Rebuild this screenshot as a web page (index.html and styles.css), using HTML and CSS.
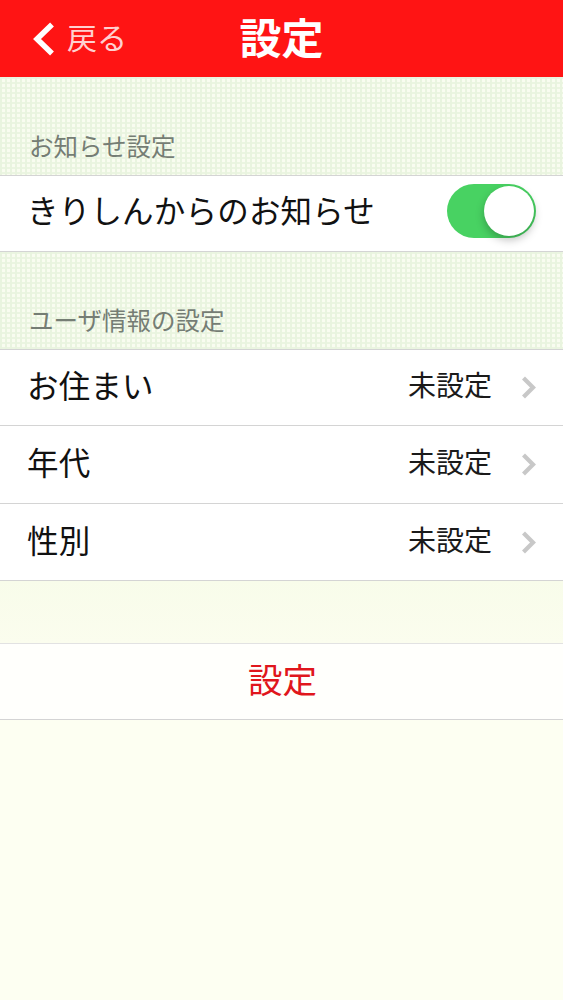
FILE: index.html
```html
<!DOCTYPE html>
<html lang="ja">
<head>
<meta charset="utf-8">
<title>設定</title>
<link rel="stylesheet" href="styles.css">
</head>
<body>
<div class="page">
  <header class="nav">
    <div class="back">
      <svg class="back-icon" width="24" height="36" viewBox="0 0 24 36"><path d="M21 3.500 L6 18 L21 32.500" fill="none" stroke="#fff" stroke-width="5.500"/></svg>
      <span>戻る</span>
    </div>
    <h1 class="title">設定</h1>
  </header>
  <section class="band band-first"><h2 class="section-label">お知らせ設定</h2></section>
  <div class="row row-bordered">
    <span class="row-label">きりしんからのお知らせ</span>
    <span class="toggle"><span class="knob"></span></span>
  </div>
  <section class="band band-second"><h2 class="section-label">ユーザ情報の設定</h2></section>
  <div class="row row-top">
    <span class="row-label">お住まい</span>
    <span class="row-value">未設定</span>
    <svg class="chevron" width="16" height="24" viewBox="0 0 16 24"><path d="M2.500 3 L12 12.500 L2.500 22" fill="none" stroke="#c8c8c8" stroke-width="4.200"/></svg>
  </div>
  <div class="row">
    <span class="row-label">年代</span>
    <span class="row-value">未設定</span>
    <svg class="chevron" width="16" height="24" viewBox="0 0 16 24"><path d="M2.500 3 L12 12.500 L2.500 22" fill="none" stroke="#c8c8c8" stroke-width="4.200"/></svg>
  </div>
  <div class="row">
    <span class="row-label">性別</span>
    <span class="row-value">未設定</span>
    <svg class="chevron" width="16" height="24" viewBox="0 0 16 24"><path d="M2.500 3 L12 12.500 L2.500 22" fill="none" stroke="#c8c8c8" stroke-width="4.200"/></svg>
  </div>
  <div class="spacer"></div>
  <div class="row row-action">設定</div>
</div>
</body>
</html>
```
FILE: styles.css
```css
* { box-sizing: border-box; }
html, body { margin: 0; padding: 0; }
body {
  background: #fdfff2;
  font-family: "Noto Sans CJK JP", "Noto Sans", sans-serif;
}
.page { width: 563px; height: 1000px; overflow: hidden; background: #fdfff2; }
.nav {
  height: 77px;
  background: #ff1414;
  display: flex;
  align-items: center;
  justify-content: center;
  position: relative;
}
.back {
  position: absolute;
  left: 31px;
  top: 21px;
  display: flex;
  align-items: center;
  gap: 12px;
  color: #ffd0d0;
  font-size: 30px;
  line-height: 36px;
}
.back span { position: relative; top: -3px; }
.back-icon { display: block; }
.title {
  margin: 0;
  color: #fff;
  font-size: 42px;
  font-weight: 700;
  line-height: 72px;
  height: 77px;
}
.band {
  display: flex;
  align-items: flex-end;
  padding: 0 0 14px 29px;
  background-color: #f9fcf0;
  background-image:
    linear-gradient(90deg, #e9f4df 0, #e9f4df 1.500px, transparent 2.500px),
    linear-gradient(#ebf5e1 0, #ebf5e1 1.500px, transparent 2.500px);
  background-size: 5px 5px;
}
.band-first { height: 98px; }
.band-second { height: 97px; }
.section-label {
  margin: 0;
  font-size: 24.500px;
  font-weight: 400;
  line-height: 30px;
  color: #757d74;
}
.row {
  height: 77.500px;
  padding: 0 26px 6px 28px;
  display: flex;
  align-items: center;
  background: #fff;
  border-bottom: 1px solid #d4d4d4;
}
.row-bordered { height: 77px; padding-bottom: 9px; border-top: 1px solid #d4d4d4; }
.row-top { height: 77px; padding-bottom: 7px; border-top: 1px solid #d4d4d4; }
.row-label { flex: 1; font-size: 31.500px; line-height: 40px; color: #111; margin-left: -1px; letter-spacing: 0.200px; }
.row-value { font-size: 28px; line-height: 40px; color: #1a1a1a; margin-right: 29px; }
.chevron { display: block; position: relative; top: 3px; }
.toggle {
  position: relative;
  top: 2px;
  width: 89px;
  height: 54px;
  border-radius: 27px;
  background: #48d262;
  margin-right: 1px;
}
.knob {
  position: absolute;
  right: 2px;
  top: 2px;
  width: 50px;
  height: 50px;
  border-radius: 50%;
  background: #fff;
  box-shadow: 0 4px 8px rgba(0, 0, 0, 0.25);
}
.spacer {
  height: 62px;
  background: linear-gradient(#f8fcea, #fbfdee);
}
.row-action {
  height: 77px;
  padding-bottom: 8px;
  justify-content: center;
  font-size: 34.500px;
  color: #e0161c;
  border-top: 1px solid #e2e2e2;
  background: #fffffc;
}
```
